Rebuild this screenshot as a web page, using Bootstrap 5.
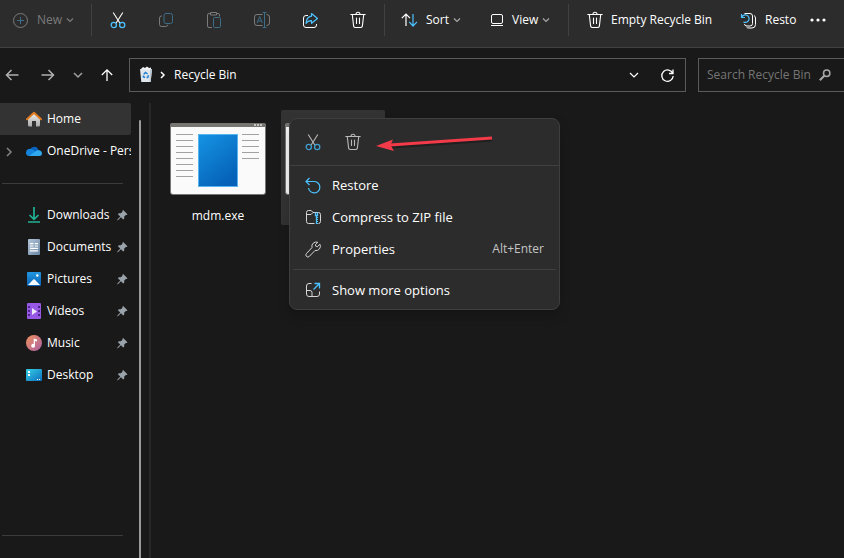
<!DOCTYPE html>
<html lang="en" data-bs-theme="dark">
<head>
<meta charset="utf-8">
<meta name="viewport" content="width=device-width, initial-scale=1">
<title>Recycle Bin</title>
<link href="https://cdn.jsdelivr.net/npm/bootstrap@5.3.0/dist/css/bootstrap.min.css" rel="stylesheet">
<style>
  body { font-family: "Open Sans", "Noto Sans", sans-serif; font-size: 12px; line-height: 16px; color: #fff; background: #191919; }
  svg { flex: none; display: block; fill: none; stroke: currentColor; }
  a { color: inherit; text-decoration: none; }
  .btn { --bs-btn-color: #fff; --bs-btn-hover-color: #fff; --bs-btn-hover-bg: #3a3a3a; --bs-btn-active-color: #fff; --bs-btn-disabled-color: #7b7b7b; --bs-btn-disabled-opacity: 1; --bs-btn-font-size: 12px; --bs-btn-line-height: 16px; --bs-btn-padding-x: 0; --bs-btn-padding-y: 0; --bs-btn-border-width: 0; display: flex; align-items: center; justify-content: center; white-space: nowrap; flex: none; }
  .toolbar { height: 48px; padding-bottom: 7px; background: #2c2c2c; border-bottom: 1px solid #404040; }
  .toolbar .btn { height: 32px; }
  .tool-group { padding: 0 2px; }
  .tool-icon { width: 48px; }
  .tool-sep { width: 1px; height: 32px; background: #414141; flex: none; }
  .tool-new { width: 91px; padding-left: 12px; }
  .tool-sort { width: 90px; padding-left: 16px; }
  .tool-view { width: 93px; padding-left: 15px; }
  .tool-empty { width: 157px; padding-left: 18px; }
  .tool-restore { padding-left: 14px; width: 71px; }
  .caret { margin-left: 4px; stroke: #a8a8a8; }
  .off .caret { stroke: #7b7b7b; }
  .off { color: #6d6d6d; --acc: #3d6d87; }
  .acc { stroke: var(--acc, #4cc2ff); }
  .nav-row { padding: 10px 0 11px; }
  .nav-row .btn { height: 34px; }
  .field { height: 34px; border: 1px solid #5b5b5b; }
  .address { margin-left: 15px; margin-right: 12px; padding: 0 10px 0 8px; }
  .search { width: 146px; border-right: 0; padding: 0 13px 0 8px; }
  .search input { background: transparent; border: 0; outline: 0; padding: 0; color: #fff; min-width: 0; }
  .search input::placeholder { color: #757575; opacity: 1; }
  .side { width: 151px; flex: none; border-right: 2px solid #282828; }
  .side-item { height: 32px; width: 131px; padding-left: 26px; overflow: hidden; white-space: nowrap; position: relative; }
  .side-item svg { stroke: none; }
  .side-item .side-name { margin-left: 5px; }
  .side-item.current { background: #333; border-radius: 0 2px 2px 0; }
  .side-item .expander { position: absolute; left: 5px; top: 12px; stroke: #858585; }
  .side-item .pin { margin-left: auto; margin-right: 3px; fill: #9aa3aa; }
  .side-rule { height: 1px; width: 121px; margin-left: 2px; background: #3b3b3b; flex: none; }
  .rule-upper { margin-top: 16px; margin-bottom: 15px; }
  .rule-lower { margin-top: auto; margin-bottom: 22px; }
  .scroll-thumb { width: 2px; margin-top: 17px; margin-right: 8px; background: #9a9a9a; border-radius: 1px 1px 0 0; }
  .files { padding: 7px 15px; gap: 11px; }
  .tile { width: 104px; height: 115px; padding-top: 12px; position: relative; }
  .tile.picked { background: #333; border-radius: 2px; }
  .tile-name { margin-top: 12px; }
  .ctx { position: absolute; left: 8px; top: 8px; width: 271px; background: #2c2c2c; border: 1px solid #3f3f3f; border-radius: 8px; box-shadow: 0 6px 12px rgba(0, 0, 0, .2); }
  .ctx-quick { height: 47px; padding-left: 3px; border-bottom: 1px solid #404040; }
  .ctx-quick .btn { width: 40px; height: 36px; color: #b9b9b9; --acc: #3f9fd0; }
  .ctx-list { padding: 3px; }
  .ctx-list .btn { width: 100%; height: 32px; padding: 0 12px; gap: 10px; font-size: 13px; justify-content: flex-start; }
  .ctx-list svg { color: #d6d6d6; }
  .ctx-rule { height: 1px; margin: 4px 0; background: #404040; }
  .keys { margin-left: auto; font-size: 12px; color: #c4c4c4; }
  .pointer { position: absolute; left: 86px; top: 14px; }
</style>
<script src="https://cdn.jsdelivr.net/npm/bootstrap@5.3.0/dist/js/bootstrap.bundle.min.js"></script>
</head>
<body class="vh-100 d-flex flex-column overflow-hidden">
<svg width="0" height="0" class="position-absolute" aria-hidden="true">
  <symbol id="cut" viewBox="0 0 16 18"><path d="M3.2 1.5 10 12.2M12.8 1.5 6 12.2" stroke-width="1.1"/><g class="acc" stroke-width="1.3"><circle cx="3.8" cy="14" r="2.6"/><circle cx="12.2" cy="14" r="2.6"/></g></symbol>
  <symbol id="bin" viewBox="0 0 16 18"><path d="M.8 3.5h14.4M6 3.3a2 2 0 0 1 4 0M2.3 3.7l1.3 11.2q.1 1.6 1.6 1.6h5.6q1.500 0 1.600-1.600L13.700 3.700M6.500 7v5.500M9.500 7v5.500" stroke-width="1.100" stroke-linecap="round"/></symbol>
  <symbol id="down" viewBox="0 0 8 8"><path d="M1 2.500 4 5.500 7 2.500" stroke-width="1.200"/></symbol>
  <symbol id="pin" viewBox="0 0 12 12"><path d="M6.700.6 11.400 5.200 10.500 6 9.700 5.900 7.900 7.700 7.800 10.100 6.900 10.900 4.300 8.400 1 11.700.4 11.700.4 11 3.600 7.700 1 5.100 1.900 4.200 4.300 4.100 6.100 2.300 5.900 1.400Z" stroke="none"/></symbol>
</svg>

<header class="toolbar d-flex align-items-center overflow-hidden">
  <button class="btn tool-new off justify-content-start" disabled>
    <svg width="17" height="17" viewBox="0 0 17 17"><circle cx="8.500" cy="8.500" r="7"/><path class="acc" d="M8.500 5v7M5 8.500h7"/></svg>
    <span class="ms-2">New</span><svg class="caret" width="8" height="8"><use href="#down"/></svg>
  </button>
  <span class="tool-sep"></span>
  <div class="tool-group d-flex">
    <button class="btn tool-icon" aria-label="Cut"><svg width="16" height="18"><use href="#cut"/></svg></button>
    <button class="btn tool-icon off" disabled aria-label="Copy"><svg width="16" height="16" viewBox="0 0 16 16"><path d="M4 4H3.500Q1.500 4 1.500 6v6.500q0 2 2 2h4q2 0 2.300-1.800"/><rect class="acc" x="6" y="1.500" width="8.500" height="10" rx="2"/></svg></button>
    <button class="btn tool-icon off" disabled aria-label="Paste"><svg width="16" height="18" viewBox="0 0 16 18"><path d="M6 16.500H3q-1.500 0-1.500-1.500V4q0-1.500 1.500-1.500h1.500M10.500 2.500H12q1.500 0 1.500 1.500v1.500M4.500 1.500h6v2.500h-6z"/><rect class="acc" x="7.500" y="6.500" width="7" height="10" rx="1.200"/></svg></button>
    <button class="btn tool-icon off" disabled aria-label="Rename"><svg width="18" height="18" viewBox="0 0 18 18"><path d="M9.500 14.500H4q-2.500 0-2.500-2.500V6Q1.500 3.500 4 3.500h5.500M13.500 3.500q3 0 3 2.500v6q0 2.500-3 2.500"/><path class="acc" d="M4 12 6.700 5.500 9.400 12M5 10h3.400M9.500 1.500h4M9.500 16.500h4M11.500 1.500v15"/></svg></button>
    <button class="btn tool-icon" aria-label="Share"><svg width="17" height="17" viewBox="0 0 17 17"><path d="M6 3.500H4Q1.500 3.500 1.500 6v7q0 2.500 2.500 2.500h8q2.500 0 2.500-2.500v-1"/><path class="acc" stroke-width="1.200" stroke-linejoin="round" d="M9.500 1.500 15.500 6.500 9.500 11.300V8.700Q6 8.500 4 11.500 4.500 4.800 9.500 4.200Z"/></svg></button>
    <button class="btn tool-icon" aria-label="Delete"><svg width="16" height="18"><use href="#bin"/></svg></button>
  </div>
  <span class="tool-sep"></span>
  <button class="btn tool-sort justify-content-start">
    <svg width="17" height="16" viewBox="0 0 17 16"><path d="M5 14V2M.8 6.200 5 2l4 4.200" stroke-width="1.200"/><path class="acc" d="M12 2v12M8.200 9.800 12 14l4-4.200" stroke-width="1.200"/></svg>
    <span class="ms-2">Sort</span><svg class="caret" width="8" height="8"><use href="#down"/></svg>
  </button>
  <button class="btn tool-view justify-content-start">
    <svg width="14" height="14" viewBox="0 0 14 14"><rect x="1.500" y="1.500" width="11" height="9" rx="1.500"/><path d="M1 12.500h12"/></svg>
    <span class="ms-2">View</span><svg class="caret" width="8" height="8"><use href="#down"/></svg>
  </button>
  <span class="tool-sep"></span>
  <button class="btn tool-empty justify-content-start"><svg width="16" height="18"><use href="#bin"/></svg><span class="ms-2">Empty Recycle Bin</span></button>
  <button class="btn tool-restore justify-content-start">
    <svg width="17" height="17" viewBox="0 0 17 17"><path d="M4.500 1.500H10q2.500 0 2.500 2.500V11.500q0 2.500-2.500 2.500H7Q4.500 14 4.500 12M14 3.500q1.500.8 1.500 2.500V12.500q0 3.500-3.500 3.500H9Q7 16 6.500 15"/><path class="acc" stroke-width="1.200" d="M1.500 2v3.500H5M1.800 5.200A3.800 3.800 0 1 1 3.500 10"/></svg>
    <span class="ms-2">Resto</span>
  </button>
  <button class="btn ms-1 px-2" aria-label="See more"><svg width="18" height="6" viewBox="0 0 18 6"><g fill="#fff" stroke="none"><circle cx="3" cy="3" r="1.600"/><circle cx="9" cy="3" r="1.600"/><circle cx="15" cy="3" r="1.600"/></g></svg></button>
</header>

<nav class="nav-row d-flex" aria-label="Address">
  <button class="btn ps-1" aria-label="Back"><svg width="16" height="16" viewBox="0 0 16 16"><path stroke="#b0b0b0" stroke-width="1.500" d="M14.500 8H3M7.500 3 2.500 8l5 5"/></svg></button>
  <button class="btn ms-3 ps-1" aria-label="Forward"><svg width="16" height="16" viewBox="0 0 16 16"><path stroke="#b0b0b0" stroke-width="1.500" d="M1.500 8H13M8.500 3l5 5-5 5"/></svg></button>
  <button class="btn ms-3" aria-label="Recent locations"><svg width="12" height="12" viewBox="0 0 12 12"><path stroke="#a0a0a0" stroke-width="1.500" d="M2 4l4 4 4-4"/></svg></button>
  <button class="btn ms-3" aria-label="Up"><svg width="14" height="14" viewBox="0 0 14 14"><path stroke-width="1.300" d="M7 13V2M1.800 7 7 1.800 12.200 7"/></svg></button>
  <div class="field address d-flex align-items-center flex-grow-1">
    <svg width="16" height="18" viewBox="0 0 16 18"><g stroke="none"><path fill="#dfe6ec" d="M2 3h12l-1.300 13H3.300z"/><path fill="#f4f4f4" d="M3 3l2-2 2 1 2-1.500L11 2l2-.5V4z"/><path fill="#b9c6d0" d="M12.300 3H14l-1.300 13h-1.200z"/></g><path stroke="#1f7fd0" stroke-width="1.500" d="M5.700 8.300 7.500 6.500 9.600 8M10.500 9.200 9.700 11.500H8.500M7 11.500 5.300 10.800 5.500 9.500"/></svg>
    <svg class="ms-1" width="8" height="10" viewBox="0 0 8 10"><path stroke-width="1.500" d="M3 2l3 3-3 3"/></svg>
    <a href="#" class="ms-1 ps-1">Recycle Bin</a>
    <button class="btn ms-auto" aria-label="Previous locations"><svg width="12" height="12" viewBox="0 0 12 12"><path stroke-width="1.200" d="M2 4l4 4 4-4"/></svg></button>
    <button class="btn ms-3 ps-1" aria-label="Refresh"><svg width="15" height="15" viewBox="0 0 15 15"><path stroke-width="1.300" d="M12.800 5.500A5.700 5.700 0 1 0 13.200 8M13 1.500v4H9"/></svg></button>
  </div>
  <div class="field search d-flex align-items-center">
    <input class="flex-grow-1" type="text" placeholder="Search Recycle Bin" aria-label="Search Recycle Bin">
    <svg width="12" height="12" viewBox="0 0 12 12"><g stroke="#a8a8a8"><circle cx="7.700" cy="4.300" r="3.200" stroke-width="1.500"/><path d="M5.300 6.700.8 11.200" stroke-width="2"/></g></svg>
  </div>
</nav>

<div class="d-flex flex-grow-1 overflow-hidden">
  <aside class="side d-flex justify-content-between">
    <nav class="d-flex flex-column" aria-label="Folders">
      <a href="#" class="side-item current d-flex align-items-center"><svg width="16" height="16" viewBox="0 0 16 16"><defs><linearGradient id="gh" x2="0" y2="1"><stop stop-color="#eee"/><stop offset="1" stop-color="#aaa"/></linearGradient></defs><path fill="url(#gh)" d="M2 7.500 8 2l6 5.500V14q0 1.500-1.300 1.500H10V10H6v5.500H3.300Q2 15.500 2 14z"/><path d="M1 8.300 8 1.700l7 6.600" fill="none" stroke="#e07a1c" stroke-width="2" stroke-linecap="round" stroke-linejoin="round"/></svg><span class="side-name">Home</span></a>
      <a href="#" class="side-item d-flex align-items-center"><svg class="expander" width="8" height="10" viewBox="0 0 8 10"><path fill="none" stroke-width="1.500" d="M2 1l4 4-4 4"/></svg><svg width="16" height="12" viewBox="0 0 16 12"><path fill="#0a64bd" d="M4 5a4.500 4.500 0 0 1 8.300-.8L9 8z"/><path fill="#1483dc" d="M0 8a4 4 0 0 1 6-3.700L14 9 3 11Q0 10.500 0 8z"/><path fill="#30a8f0" d="M3 11 11.500 5Q16 5 16 8.500 16 11 13 11z"/></svg><span class="side-name">OneDrive - Perso</span></a>
      <div class="side-rule rule-upper"></div>
      <a href="#" class="side-item d-flex align-items-center"><svg width="16" height="16" viewBox="0 0 16 16"><path fill="none" stroke="#20b294" stroke-width="1.700" d="M8 0v12M3.500 8 8 12.300 12.500 8M2 15h12"/></svg><span class="side-name">Downloads</span><svg class="pin" width="11" height="12"><use href="#pin"/></svg></a>
      <a href="#" class="side-item d-flex align-items-center"><svg width="16" height="16" viewBox="0 0 16 16"><defs><linearGradient id="gd" x2="1" y2="1"><stop stop-color="#b2c5d8"/><stop offset="1" stop-color="#6b87a4"/></linearGradient></defs><rect x="2" width="12" height="16" rx="1" fill="url(#gd)"/><path fill="none" stroke="#fff" stroke-width="1.200" d="M4 4.600h3.500M8.700 4.600H12M4 7h3.500M8.700 7H12M4 9.400h8M4 11.800h8"/></svg><span class="side-name">Documents</span><svg class="pin" width="11" height="12"><use href="#pin"/></svg></a>
      <a href="#" class="side-item d-flex align-items-center"><svg width="16" height="16" viewBox="0 0 16 16"><defs><linearGradient id="gp" x2="0" y2="1"><stop stop-color="#2196e2"/><stop offset="1" stop-color="#0a62b4"/></linearGradient></defs><rect x="1" y="1" width="14" height="14" rx="1" fill="url(#gp)"/><path fill="#f2faff" d="M2 14 7.300 8.500q.7-.7 1.400 0L14 14z"/><circle cx="11.300" cy="4.500" r="1.200" fill="#fff"/></svg><span class="side-name">Pictures</span><svg class="pin" width="11" height="12"><use href="#pin"/></svg></a>
      <a href="#" class="side-item d-flex align-items-center"><svg width="16" height="16" viewBox="0 0 16 16"><rect x="1" width="14" height="16" rx="1" fill="#9858e6"/><path fill="#eee8fb" d="M6 5v7l5-3.500z"/><path stroke="#4b2587" stroke-width="2" stroke-dasharray="2 2" d="M3 3v11M13 3v11"/></svg><span class="side-name">Videos</span><svg class="pin" width="11" height="12"><use href="#pin"/></svg></a>
      <a href="#" class="side-item d-flex align-items-center"><svg width="16" height="16" viewBox="0 0 16 16"><defs><linearGradient id="gm" x2="1" y2="1"><stop stop-color="#f2935c"/><stop offset="1" stop-color="#a95fa4"/></linearGradient></defs><circle cx="8" cy="8" r="8" fill="url(#gm)"/><path fill="#fff" d="M7.700 3.500 11 4.500v2L9 6v4.800a1.900 1.900 0 1 1-1.300-1.800z"/></svg><span class="side-name">Music</span><svg class="pin" width="11" height="12"><use href="#pin"/></svg></a>
      <a href="#" class="side-item d-flex align-items-center"><svg width="16" height="12" viewBox="0 0 16 12"><defs><linearGradient id="gk" x2="1" y2="1"><stop stop-color="#35d0e4"/><stop offset="1" stop-color="#0e6fc0"/></linearGradient></defs><rect width="16" height="12" rx="1" fill="url(#gk)"/><path fill="#fff" d="M2 2h2v2H2zM2 5h2v2H2zM11 10h1v1h-1zM13 10h1v1h-1z"/></svg><span class="side-name">Desktop</span><svg class="pin" width="11" height="12"><use href="#pin"/></svg></a>
      <div class="side-rule rule-lower"></div>
    </nav>
    <div class="scroll-thumb"></div>
  </aside>

  <main class="files d-flex flex-grow-1 align-items-start">
    <div class="tile d-flex flex-column align-items-center">
      <svg width="98" height="74" viewBox="0 0 98 74" role="img" aria-label="Application">
        <defs><linearGradient id="ga" x2=".6" y2="1"><stop stop-color="#1694e4"/><stop offset="1" stop-color="#0562b8"/></linearGradient></defs>
        <rect x="1.500" y="1.500" width="95" height="71" rx="2.500" fill="#fafafa" stroke="#777572"/>
        <path stroke="none" fill="#777572" d="M1 5V3q0-2 2-2h92q2 0 2 2v2z"/>
        <path stroke="#ddd" stroke-width="1.500" stroke-dasharray="2 1" d="M85 3h9"/>
        <path stroke="#a2a2a2" d="M7 12.500h17M7 18.500h17M7 24.500h17M7 30.500h17M7 36.500h17M7 42.500h17M7 48.500h17M7 54.500h17M73 12.500h17M73 18.500h17M73 24.500h17M73 30.500h17M73 36.500h17"/>
        <rect x="29.500" y="12.500" width="39" height="52" fill="url(#ga)" stroke="#58b4ee"/>
      </svg>
      <span class="tile-name">mdm.exe</span>
    </div>
    <div class="tile picked d-flex flex-column align-items-center">
      <svg width="98" height="74" viewBox="0 0 98 74"><rect x="1.500" y="1.500" width="95" height="71" rx="2.500" fill="#fafafa" stroke="#777572"/><path stroke="none" fill="#777572" d="M1 5V3q0-2 2-2h92q2 0 2 2v2z"/></svg>
      <div class="ctx" role="menu">
        <div class="ctx-quick d-flex align-items-center">
          <button class="btn" role="menuitem" aria-label="Cut"><svg width="16" height="18"><use href="#cut"/></svg></button>
          <button class="btn" role="menuitem" aria-label="Delete"><svg width="16" height="18"><use href="#bin"/></svg></button>
        </div>
        <div class="ctx-list">
          <button class="btn" role="menuitem"><svg width="17" height="17" viewBox="0 0 17 17"><path class="acc" stroke-width="1.200" d="M4.500 1 1 4.500 4.500 8M1.200 4.500H9.500A5.700 5.700 0 1 1 3.500 11"/></svg>Restore</button>
          <button class="btn" role="menuitem"><svg width="17" height="16" viewBox="0 0 17 16"><path d="M9.500 14.500h-6q-2 0-2-2v-9q0-2 2-2h2.700L8 3.500h5.500q2 0 2 2v7q0 2-2 2M1.500 5.500H6l2-2"/><path class="acc" d="M10.500 3.500v3h2v-3M11.500 6.500V15" stroke-width="1.300"/><path class="acc" d="M12.500 8v7" stroke-dasharray="1 1"/></svg>Compress to ZIP file</button>
          <button class="btn" role="menuitem"><svg width="17" height="17" viewBox="0 0 17 17"><path stroke-linejoin="round" d="M14.900 3.200 12.300 5.800 10.600 5 10.400 3.700 12.800 1.300A4.400 4.400 0 0 0 7 6.600L1.500 12.500A1.900 1.900 0 0 0 4.300 15.400L10 9.500A4.400 4.400 0 0 0 14.900 3.200Z"/></svg>Properties<span class="keys">Alt+Enter</span></button>
          <div class="ctx-rule"></div>
          <button class="btn" role="menuitem"><svg width="17" height="16" viewBox="0 0 17 16"><path d="M6.500 1.500H4Q1.500 1.500 1.500 4v8q0 2.500 2.500 2.500h8q2.500 0 2.500-2.500V9.500M1.500 8.500H5q2 0 2 2v4"/><path class="acc" stroke-width="1.300" d="M9.500 1.500h5v5M14.500 1.500 8.500 7.500"/></svg>Show more options</button>
        </div>
        <svg class="pointer" width="120" height="20" viewBox="0 0 120 20" aria-hidden="true"><path stroke="#111" stroke-opacity=".5" stroke-width="3" d="M15 14 116 7"/><path stroke="#f23a48" stroke-width="3" d="M14 12 116 5"/><path fill="#f23a48" stroke="none" d="M0 13 17 6.500 14.500 12 18 18z"/></svg>
      </div>
    </div>
  </main>
</div>
</body>
</html>
